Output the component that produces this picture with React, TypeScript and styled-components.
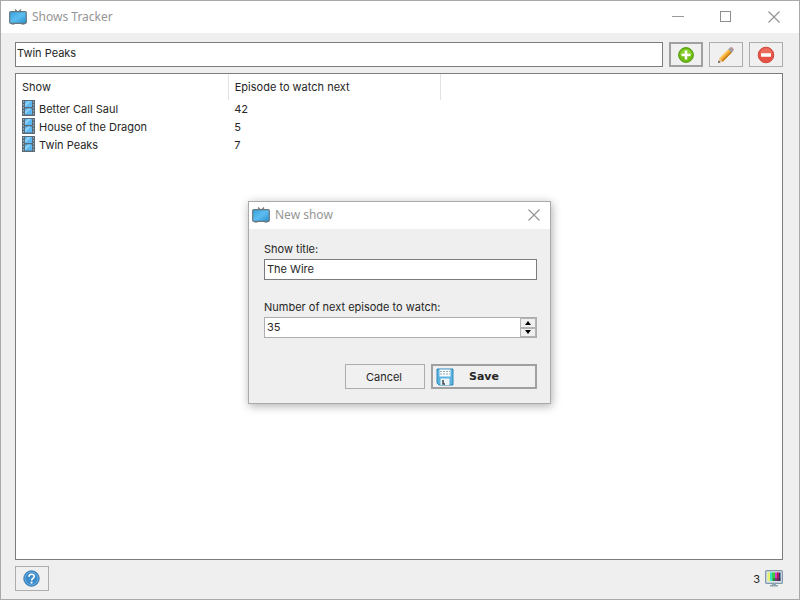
import React from "react";
import styled, { createGlobalStyle } from "styled-components";

const GlobalStyle = createGlobalStyle`
  *, *::before, *::after { box-sizing: border-box; }
  body {
    margin: 0;
    background: #efefef;
    color: #262626;
    font-family: Inter, "Liberation Sans", sans-serif;
    font-size: 11px;
    line-height: 18px;
  }
  button, input { font: inherit; color: inherit; border-radius: 0; }
`;

const Window = styled.main`
  position: relative;
  display: flex;
  flex-direction: column;
  min-height: 100vh;
  border: 1px solid #a9a9a9;
  background: #efefef;
`;

const TitleBar = styled.header<{ $compact?: boolean }>`
  display: flex;
  align-items: center;
  height: ${(p) => (p.$compact ? 27 : 32)}px;
  padding: ${(p) => (p.$compact ? "0 10px 2px 3px" : "0 19px 0 8px")};
  gap: 5px;
  background: #ffffff;
`;

const Title = styled.h1`
  flex: 1;
  margin: 0;
  color: #959595;
  font-family: "Noto Sans", sans-serif;
  font-size: 12px;
  font-weight: 400;
  line-height: 18px;
`;

const Controls = styled.div`
  display: flex;
  gap: 36px;
`;

const CaptionButton = styled.button`
  display: flex;
  padding: 0;
  border: 0;
  background: none;
`;

const Content = styled.div`
  display: flex;
  flex: 1;
  flex-direction: column;
  gap: 6px;
  padding: 9px 16px 8px 14px;
`;

const Toolbar = styled.form`
  display: flex;
  gap: 6px;
`;

const TextInput = styled.input<{ $tall?: boolean }>`
  flex: 1 1 auto;
  width: 100%;
  min-width: 0;
  height: ${(p) => (p.$tall ? 25 : 21)}px;
  padding: ${(p) => (p.$tall ? "0 1px 4px" : "0 2px 2px")};
  border: 1px solid #7c7c7c;
  outline: 0;
  background: #ffffff;
`;

const IconButton = styled.button<{ $default?: boolean }>`
  display: flex;
  flex: none;
  align-items: center;
  justify-content: center;
  width: 34px;
  height: 25px;
  padding: 0 1px 0 0;
  border: ${(p) => (p.$default ? "2px solid #a0a0a0" : "1px solid #adadad")};
  background: #f0f0f0;
`;

const ListPanel = styled.section`
  flex: 1;
  padding: 0;
  border: 1px solid #7c7c7c;
  background: #ffffff;
`;

const ShowTable = styled.table`
  width: 425px;
  table-layout: fixed;
  border-collapse: collapse;
`;

const HeadCell = styled.th`
  height: 26px;
  padding: 0 6px;
  border-right: 1px solid #e3e3e3;
  font-weight: 400;
  text-align: left;
`;

const Cell = styled.td`
  height: 18px;
  padding: 0 6px;
`;

const ShowName = styled.span`
  display: flex;
  align-items: center;
  gap: 4px;
  height: 18px;
`;

const StatusBar = styled.footer`
  display: flex;
  align-items: center;
  justify-content: space-between;
`;

const Counter = styled.div`
  display: flex;
  align-items: center;
  gap: 5px;
`;

const Overlay = styled.div`
  position: absolute;
  inset: 0;
  display: grid;
  place-items: center;
  padding: 5px 1px 0 0;
`;

const Dialog = styled.section`
  width: 303px;
  border: 1px solid #aaaaaa;
  background: #efefef;
  box-shadow: 1px 2px 9px rgba(0, 0, 0, 0.32);
`;

const DialogForm = styled.form`
  display: flex;
  flex-direction: column;
  padding: 11px 13px 14px 15px;
`;

const Field = styled.div`
  display: flex;
  flex-direction: column;
  gap: 1px;
  margin-bottom: 18px;
`;

const Label = styled.label`
  line-height: 18px;
`;

const Spinner = styled.div`
  display: flex;
  height: 21px;
  border: 1px solid #adadad;
  background: #ffffff;
`;

const SpinnerInput = styled.input`
  flex: 1;
  min-width: 0;
  padding: 0 2px 2px;
  border: 0;
  outline: 0;
  background: transparent;
`;

const SpinnerButtons = styled.div`
  display: flex;
  flex-direction: column;
  width: 16px;
  background: #efefef;
`;

const StepButton = styled.button`
  display: flex;
  flex: 1;
  align-items: center;
  justify-content: center;
  padding: 0;
  border: 1px solid #b4b4b4;
  background: #f0f0f0;
`;

const Actions = styled.div`
  display: flex;
  justify-content: flex-end;
  gap: 6px;
  padding-top: 8px;
`;

const CancelButton = styled.button`
  width: 80px;
  height: 25px;
  padding: 0 2px 0 0;
  border: 1px solid #adadad;
  background: #f0f0f0;
`;

const SaveButton = styled.button`
  display: flex;
  align-items: center;
  width: 106px;
  height: 25px;
  padding: 0 3px;
  border: 2px solid #a0a0a0;
  background: #f0f0f0;
  font-family: "DejaVu Sans", sans-serif;
  font-weight: 700;
`;

const SaveText = styled.span`
  flex: 1;
  padding-right: 18px;
  text-align: center;
`;

const TvIcon = () => (
  <svg width="18" height="16" viewBox="0 0 18 16" aria-hidden="true">
    <defs>
      <linearGradient id="tv" x1="0" y1="0" x2="1" y2="1">
        <stop offset="0" stopColor="#35a3dc" />
        <stop offset=".5" stopColor="#5dbdf0" />
        <stop offset="1" stopColor="#2791cf" />
      </linearGradient>
    </defs>
    <path d="M6 .5 8.5 3M12 .5 9.5 3" stroke="#777" strokeWidth="1.2" />
    <path d="M2.5 14.5h3M12.500 14.5h3" stroke="#5a5a5a" strokeWidth="2" />
    <rect x=".7" y="2.700" width="16.600" height="11.600" rx="1" fill="url(#tv)" stroke="#667780" strokeWidth="1.200" />
  </svg>
);

const FilmIcon = () => (
  <svg width="13" height="18" viewBox="0 0 13 18" aria-hidden="true">
    <rect width="13" height="16" fill="#5a6b78" />
    <path d="M1.500 1v14M11.500 1v14" stroke="#9fb0ba" strokeWidth="1" strokeDasharray="1.500 1.500" />
    <rect x="3" y="1" width="7" height="6" fill="#5cb8f2" />
    <rect x="3" y="8.500" width="7" height="6" fill="#5cb8f2" />
    <path d="M3 7V4l3-3h3zM3 14.500V11.500l3-3h3z" fill="#8dd2fa" />
  </svg>
);

const AddIcon = () => (
  <svg width="16" height="16" viewBox="0 0 16 16" aria-hidden="true">
    <circle cx="8" cy="8" r="7.400" fill="#6fbd12" stroke="#529a10" />
    <path d="M2 8a6 6 0 0 1 12 0q-6-2-12 0" fill="#8bd032" />
    <path d="M8 3.500v9M3.500 8h9" stroke="#fff" strokeWidth="2.600" />
  </svg>
);

const PencilIcon = () => (
  <svg width="18" height="18" viewBox="0 0 18 18" aria-hidden="true">
    <path d="M1 17 2.300 12.300 5.700 15.700z" fill="#e8c9a0" />
    <path d="M1 17 1.700 14.500 3.500 16.300z" fill="#4c4c4c" />
    <path d="M2.300 12.300 11.700 2.900 15.100 6.300 5.700 15.700z" fill="#f3ab32" />
    <path d="M4.600 14.600 14 5.200 15.100 6.300 5.700 15.700z" fill="#c77d1a" />
    <path d="M2.300 12.300 11.700 2.900 12.600 3.800 3.200 13.200z" fill="#ffd06d" />
    <path d="M11.300 3.300 13 1.600 16.400 5 14.700 6.700z" fill="#9b9ca3" />
    <path d="M13 1.600q1.200-1.200 2.900.5T16.400 5z" fill="#b89098" />
  </svg>
);

const RemoveIcon = () => (
  <svg width="18" height="18" viewBox="0 0 18 18" aria-hidden="true">
    <circle cx="9" cy="9" r="7.800" fill="#e55244" stroke="#d34b40" />
    <path d="M3 8a6 6 0 0 1 12 0z" fill="#ed6d5d" />
    <rect x="4" y="7.200" width="10" height="3.600" rx=".5" fill="#fff" />
  </svg>
);

const HelpIcon = () => (
  <svg width="17" height="17" viewBox="0 0 17 17" aria-hidden="true">
    <circle cx="8.500" cy="8.500" r="7.700" fill="#3d8ccb" stroke="#3478ae" />
    <circle cx="8.500" cy="8.500" r="6.500" fill="none" stroke="#69ace0" />
    <path d="M6 6.700c0-3.300 5.200-3.300 5.200-.3 0 2-2.600 1.900-2.600 4" fill="none" stroke="#fff" strokeWidth="1.600" />
    <circle cx="8.600" cy="12.600" r="1.100" fill="#fff" />
  </svg>
);

const MonitorIcon = () => (
  <svg width="18" height="18" viewBox="0 0 18 18" aria-hidden="true">
    <rect x=".6" y=".6" width="16.800" height="12.800" rx="1" fill="#d7e2ea" stroke="#8298a8" strokeWidth="1.200" />
    <rect x="2.500" y="2.500" width="3" height="8.500" fill="#e8f170" />
    <rect x="5" y="2.500" width="2.500" height="8.500" fill="#38dfc8" />
    <rect x="7" y="2.500" width="3" height="8.500" fill="#39cc47" />
    <rect x="10" y="2.500" width="2.500" height="8.500" fill="#d936bd" />
    <rect x="12" y="2.500" width="2" height="8.500" fill="#ae235c" />
    <rect x="14" y="2.500" width="1.500" height="8.500" fill="#28326e" />
    <path d="M8 8h7.500v3H8z" fill="#2b3a49" fillOpacity=".5" />
    <path d="M7 13.500h4V15h2v1.500H5V15h2z" fill="#91a4b1" />
  </svg>
);

const DiskIcon = () => (
  <svg width="18" height="18" viewBox="0 0 18 18" aria-hidden="true">
    <path d="M1 1h16v16H3l-2-2z" fill="#5bb3e2" stroke="#3187b8" />
    <rect x="3.500" y="1.500" width="11" height="7" fill="#f8fbfc" />
    <path d="M4 3.500h10M4 6h10" stroke="#9aa9b2" strokeDasharray="2 1" />
    <rect x="4.500" y="10.500" width="9" height="6.500" fill="#eef3f5" />
    <path d="M7 12v4h2" stroke="#39444b" strokeWidth="1.500" fill="none" />
  </svg>
);

const CloseIcon = () => (
  <svg width="12" height="12" viewBox="0 0 12 12" aria-hidden="true">
    <path d="M.5.5l11 11M11.500.5l-11 11" stroke="#929292" strokeWidth="1.100" />
  </svg>
);

const shows = [
  { name: "Better Call Saul", next: 42 },
  { name: "House of the Dragon", next: 5 },
  { name: "Twin Peaks", next: 7 },
];

export default function App() {
  const [episode, setEpisode] = React.useState(35);
  return (
    <>
      <GlobalStyle />
      <Window>
        <TitleBar>
          <TvIcon />
          <Title>Shows Tracker</Title>
          <Controls>
            <CaptionButton aria-label="Minimize">
              <svg width="12" height="12" viewBox="0 0 12 12" aria-hidden="true">
                <path d="M0 5.500h12" stroke="#999" />
              </svg>
            </CaptionButton>
            <CaptionButton aria-label="Maximize">
              <svg width="12" height="12" viewBox="0 0 12 12" aria-hidden="true">
                <rect x=".5" y=".5" width="10" height="10" fill="none" stroke="#8e8e8e" />
              </svg>
            </CaptionButton>
            <CaptionButton aria-label="Close">
              <CloseIcon />
            </CaptionButton>
          </Controls>
        </TitleBar>
        <Content>
          <Toolbar onSubmit={(e) => e.preventDefault()}>
            <TextInput $tall aria-label="Selected show" defaultValue="Twin Peaks" />
            <IconButton type="button" $default aria-label="Add show"><AddIcon /></IconButton>
            <IconButton type="button" aria-label="Edit show"><PencilIcon /></IconButton>
            <IconButton type="button" aria-label="Remove show"><RemoveIcon /></IconButton>
          </Toolbar>
          <ListPanel>
            <ShowTable>
              <thead>
                <tr>
                  <HeadCell scope="col">Show</HeadCell>
                  <HeadCell scope="col">Episode to watch next</HeadCell>
                </tr>
              </thead>
              <tbody>
                {shows.map((show) => (
                  <tr key={show.name}>
                    <Cell><ShowName><FilmIcon />{show.name}</ShowName></Cell>
                    <Cell>{show.next}</Cell>
                  </tr>
                ))}
              </tbody>
            </ShowTable>
          </ListPanel>
          <StatusBar>
            <IconButton type="button" aria-label="Help"><HelpIcon /></IconButton>
            <Counter>{shows.length}<MonitorIcon /></Counter>
          </StatusBar>
        </Content>
        <Overlay>
          <Dialog role="dialog" aria-labelledby="dialog-title">
            <TitleBar $compact>
              <TvIcon />
              <Title as="h2" id="dialog-title">New show</Title>
              <CaptionButton aria-label="Close dialog"><CloseIcon /></CaptionButton>
            </TitleBar>
            <DialogForm onSubmit={(e) => e.preventDefault()}>
              <Field>
                <Label htmlFor="show-title">Show title:</Label>
                <TextInput id="show-title" defaultValue="The Wire" />
              </Field>
              <Field>
                <Label htmlFor="next-episode">Number of next episode to watch:</Label>
                <Spinner>
                  <SpinnerInput
                    id="next-episode"
                    inputMode="numeric"
                    value={episode}
                    onChange={(e) => setEpisode(Number(e.target.value) || 0)}
                  />
                  <SpinnerButtons>
                    <StepButton type="button" aria-label="Increase" onClick={() => setEpisode(episode + 1)}>
                      <svg width="6" height="4" viewBox="0 0 6 4" aria-hidden="true"><path d="M3 0 6 4H0z" /></svg>
                    </StepButton>
                    <StepButton type="button" aria-label="Decrease" onClick={() => setEpisode(episode - 1)}>
                      <svg width="6" height="4" viewBox="0 0 6 4" aria-hidden="true"><path d="M3 4 6 0H0z" /></svg>
                    </StepButton>
                  </SpinnerButtons>
                </Spinner>
              </Field>
              <Actions>
                <CancelButton type="button">Cancel</CancelButton>
                <SaveButton type="submit"><DiskIcon /><SaveText>Save</SaveText></SaveButton>
              </Actions>
            </DialogForm>
          </Dialog>
        </Overlay>
      </Window>
    </>
  );
}
